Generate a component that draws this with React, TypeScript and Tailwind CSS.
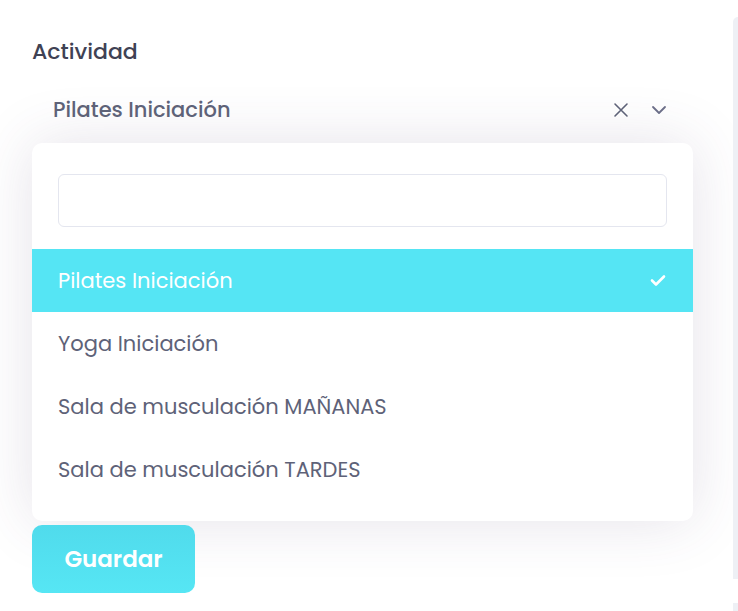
import React from "react";

const font = { fontFamily: "Poppins, Inter, 'Open Sans', sans-serif" };

export default function App() {
  const options = ["Yoga Iniciación", "Sala de musculación MAÑANAS", "Sala de musculación TARDES"];
  return (
    <div className="flex w-[738px] h-[611px] bg-white overflow-hidden" style={font}>
      <div className="flex-1 pl-[32px] pr-[40px] pt-[37px]">
        <div className="text-[22px] leading-[30px] font-medium text-[#3f4254]">Actividad</div>
        <div className="mt-[18px] h-[50px] flex items-center justify-between pl-[21px] pr-[26px]">
          <span className="text-[21px] font-medium text-[#5e6278]">Pilates Iniciación</span>
          <div className="flex items-center gap-[22px]">
            <svg width="16" height="16" viewBox="0 0 16 16" fill="none" stroke="#5e6278" strokeWidth="1.6" strokeLinecap="round">
              <path d="M2 2L14 14M14 2L2 14" />
            </svg>
            <svg width="16" height="10" viewBox="0 0 16 10" fill="none" stroke="#6b6e88" strokeWidth="1.8" strokeLinecap="round" strokeLinejoin="round">
              <path d="M2 2L8 8L14 2" />
            </svg>
          </div>
        </div>
        <div className="mt-[8px] h-[378px] rounded-[10px] bg-white shadow-[0_0_60px_0_rgba(82,63,105,0.15)] pt-[31px] pb-[20px] flex flex-col">
          <div className="mx-[26px] h-[53px] rounded-[6px] border border-[#e4e6ef] bg-white" />
          <div className="mt-[22px] h-[63px] bg-[#55e5f4] flex items-center justify-between pl-[26px] pr-[27px]">
            <span className="text-[21px] text-white">Pilates Iniciación</span>
            <svg width="16" height="13" viewBox="0 0 16 13" fill="none" stroke="white" strokeWidth="2.6" strokeLinecap="round" strokeLinejoin="round">
              <path d="M2 6.5L6 10.5L14 2.5" />
            </svg>
          </div>
          {options.map((o) => (
            <div key={o} className="h-[63px] flex items-center pl-[26px]">
              <span className="text-[21px] text-[#5e6278]">{o}</span>
            </div>
          ))}
        </div>
        <button className="mt-[4px] w-[163px] h-[68px] rounded-[10px] bg-gradient-to-b from-[#50dbec] to-[#56e6f4] text-white text-[23px] font-semibold">
          Guardar
        </button>
      </div>
      <div className="w-[5px] flex flex-col">
        <div className="mt-[17px] h-[562px] bg-[#eef0f5] rounded-tl-[5px]" />
        <div className="mt-[24px] flex-1 bg-[#eef0f5]" />
      </div>
    </div>
  );
}
